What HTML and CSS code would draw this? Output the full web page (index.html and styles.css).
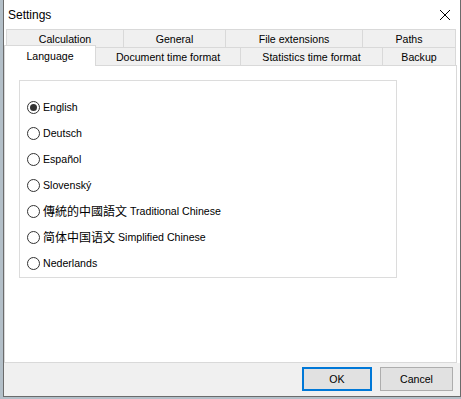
FILE: index.html
```html
<!DOCTYPE html>
<html>
<head>
<title>Settings</title>
<meta http-equiv="Content-Type" content="text/html; charset=utf-8">
<link rel="stylesheet" href="styles.css">
</head>
<body>
<div class="window">
	<div class="titlebar">
		<span class="title">Settings</span>
		<svg class="close" width="10" height="10" viewBox="0 0 10 10">
			<path d="M0 0L10 10M10 0L0 10" stroke="#000" stroke-width="1" fill="none"/>
		</svg>
	</div>

	<div class="tabstrip">
		<div class="tabrow top">
			<div class="tab w-calc">Calculation</div>
			<div class="tab w-general">General</div>
			<div class="tab w-ext">File extensions</div>
			<div class="tab w-paths">Paths</div>
		</div>
		<div class="tabrow bottom">
			<div class="tab selected w-lang">Language</div>
			<div class="tab w-doc">Document time format</div>
			<div class="tab w-stat">Statistics time format</div>
			<div class="tab w-backup">Backup</div>
		</div>
	</div>

	<div class="tabpage">
		<div class="group">
			<label class="option"><span class="radio checked"></span><span class="text">English</span></label>
			<label class="option"><span class="radio"></span><span class="text">Deutsch</span></label>
			<label class="option"><span class="radio"></span><span class="text">Español</span></label>
			<label class="option"><span class="radio"></span><span class="text">Slovenský</span></label>
			<label class="option"><span class="radio"></span><span class="text"><span class="cjk tc">傳統的中國語文</span><span>Traditional Chinese</span></span></label>
			<label class="option"><span class="radio"></span><span class="text"><span class="cjk sc">简体中国语文</span><span>Simplified Chinese</span></span></label>
			<label class="option"><span class="radio"></span><span class="text">Nederlands</span></label>
		</div>
	</div>

	<div class="footer">
		<button class="button ok">OK</button>
		<button class="button cancel">Cancel</button>
	</div>
</div>
</body>
</html>
```

FILE: styles.css
```css
body {
	margin: 0;
	background: #b3bfc8;
	font-family: "Liberation Sans", Arial, sans-serif;
	font-size: 10.6px;
	color: #000;
}

.window {
	margin-left: 3px;
	width: 456px;
	height: 396px;
	border: 1px solid #6b6b6b;
	border-top: 0;
	background: #fff;
	display: flex;
	flex-direction: column;
}

/* title bar */
.titlebar {
	height: 29px;
	flex: none;
	display: flex;
	align-items: center;
	justify-content: space-between;
	padding: 0 10px 0 4px;
	font-size: 12px;
}

/* tabs */
.tabrow {
	display: flex;
	height: 18px;
}
.tabrow.top {
	padding-left: 2px;
}
.tab {
	box-sizing: border-box;
	height: 18px;
	border: 1px solid #d9d9d9;
	border-bottom: 0;
	background: #f0f0f0;
	display: flex;
	align-items: center;
	justify-content: center;
	margin-left: -1px;
	white-space: nowrap;
}
.tab:first-child {
	margin-left: 0;
}
.tab.selected {
	position: relative;
	z-index: 1;
	height: 21px;
	margin-top: -2px;
	background: #fff;
}

.w-calc { width: 118px; }
.w-general { width: 103px; }
.w-ext { width: 138px; }
.w-paths { width: 94px; }
.w-lang { width: 92px; }
.w-doc { width: 146px; }
.w-stat { width: 143px; }
.w-backup { width: 74px; }

/* page */
.tabpage {
	box-sizing: border-box;
	width: 453px;
	height: 298px;
	flex: none;
	border: 1px solid #d9d9d9;
	padding: 14px;
}

.group {
	box-sizing: border-box;
	width: 378px;
	height: 198px;
	border: 1px solid #dcdcdc;
	padding: 13px 0 0 7px;
}

.option {
	height: 26px;
	display: flex;
	align-items: center;
	gap: 3px;
	white-space: nowrap;
}

.text {
	display: flex;
	align-items: center;
	gap: 3px;
}

.radio {
	box-sizing: border-box;
	width: 13px;
	height: 13px;
	border: 1px solid #333;
	border-radius: 50%;
	background: #fff;
	display: flex;
	align-items: center;
	justify-content: center;
	flex: none;
}
.radio.checked::after {
	content: "";
	width: 7px;
	height: 7px;
	border-radius: 50%;
	background: #333;
}

.cjk {
	font-size: 12px;
	line-height: 14px;
}
.cjk.tc {
	font-family: "Noto Sans CJK TC", sans-serif;
}
.cjk.sc {
	font-family: "Noto Sans CJK SC", sans-serif;
}

/* buttons */
.footer {
	flex: 1;
	background: #f0f0f0;
	display: flex;
	justify-content: flex-end;
	align-items: flex-start;
	gap: 8px;
	padding: 4px 7px 0 0;
}

.button {
	box-sizing: border-box;
	height: 24px;
	padding: 0;
	font: inherit;
	color: #000;
	background: #e1e1e1;
	border: 1px solid #adadad;
}
.button.ok {
	width: 70px;
	border: 2px solid #0078d7;
}
.button.cancel {
	width: 73px;
}
```
